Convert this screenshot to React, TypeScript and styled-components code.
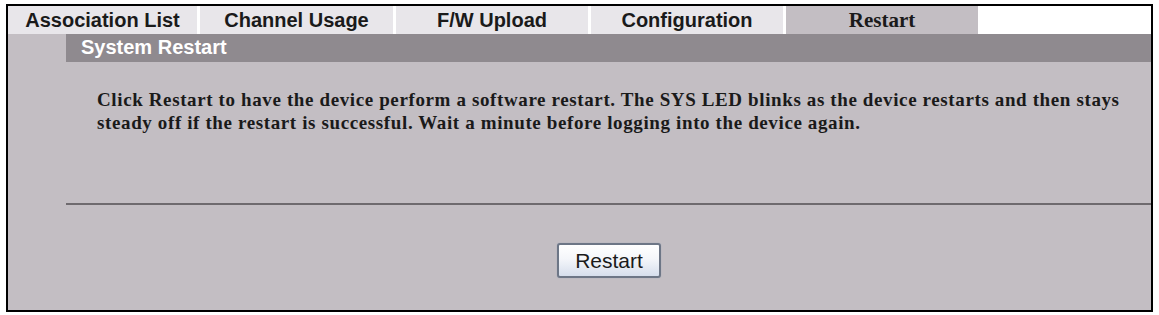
import React from "react";
import styled, { createGlobalStyle } from "styled-components";

const Global = createGlobalStyle`
  html, body { margin: 0; padding: 0; background: #ffffff; }
  body { font-family: "Liberation Sans", Arial, sans-serif; }
`;

const Page = styled.div`
  padding: 4px 0 0 6px;
  width: 1159px;
  height: 315px;
  box-sizing: border-box;
`;

const Frame = styled.div`
  width: 1147px;
  height: 308px;
  box-sizing: border-box;
  border: 2px solid #000;
  background: #c3bec3;
  display: flex;
  flex-direction: column;
`;

const TabBar = styled.div`
  display: flex;
  gap: 3px;
  height: 28px;
  background: #ffffff;
`;

const Tab = styled.div<{ $active?: boolean; $w: number }>`
  width: ${(p) => p.$w}px;
  display: flex;
  align-items: center;
  justify-content: center;
  background: ${(p) => (p.$active ? "#c3bec3" : "#e8e6ea")};
  color: #1a1a1a;
  font-family: ${(p) =>
    p.$active ? '"Liberation Serif", "Times New Roman", serif' : '"Liberation Sans", Arial, sans-serif'};
  font-weight: bold;
  font-size: ${(p) => (p.$active ? "21px" : "20px")};
  padding-top: 1px;
  box-sizing: border-box;
  white-space: nowrap;
`;

const HeaderRow = styled.div`
  display: flex;
  height: 28px;
  padding-left: 58px;
`;

const HeaderBand = styled.div`
  flex: 1;
  background: #8f8a8f;
  color: #ffffff;
  font-weight: bold;
  font-size: 20px;
  display: flex;
  align-items: center;
  padding-left: 15px;
  padding-bottom: 1px;
`;

const Body = styled.div`
  padding: 26px 24px 0 89px;
  height: 141px;
  box-sizing: border-box;
`;

const Message = styled.p`
  margin: 0;
  font-family: "Liberation Serif", "Times New Roman", serif;
  font-weight: bold;
  font-size: 19px;
  letter-spacing: 0.62px;
  line-height: 23px;
  color: #1a1a1a;
`;

const Rule = styled.hr`
  margin: 0 0 0 58px;
  border: none;
  height: 2px;
  background: #6e6a6e;
`;

const ButtonRow = styled.div`
  display: flex;
  justify-content: center;
  padding-top: 38px;
  padding-left: 59px;
`;

const Button = styled.button`
  width: 104px;
  height: 35px;
  border: 2px solid #6d7686;
  border-radius: 3px;
  background: linear-gradient(#ffffff 0%, #f4f6fa 45%, #d6deec 100%);
  font-family: "Liberation Sans", Arial, sans-serif;
  font-size: 21px;
  color: #1a1a1a;
  padding: 0;
  box-shadow: 0 0 1px #8a9ab5;
`;

const tabs = [
  { label: "Association List", w: 189 },
  { label: "Channel Usage", w: 193 },
  { label: "F/W Upload", w: 192 },
  { label: "Configuration", w: 192 },
  { label: "Restart", w: 192, active: true },
];

export default function App() {
  return (
    <>
      <Global />
      <Page>
        <Frame>
          <TabBar>
            {tabs.map((t) => (
              <Tab key={t.label} $w={t.w} $active={t.active}>
                {t.label}
              </Tab>
            ))}
          </TabBar>
          <HeaderRow>
            <HeaderBand>System Restart</HeaderBand>
          </HeaderRow>
          <Body>
            <Message>
              Click Restart to have the device perform a software restart. The SYS LED blinks as the device restarts and
              then stays steady off if the restart is successful. Wait a minute before logging into the device again.
            </Message>
          </Body>
          <Rule />
          <ButtonRow>
            <Button>Restart</Button>
          </ButtonRow>
        </Frame>
      </Page>
    </>
  );
}
